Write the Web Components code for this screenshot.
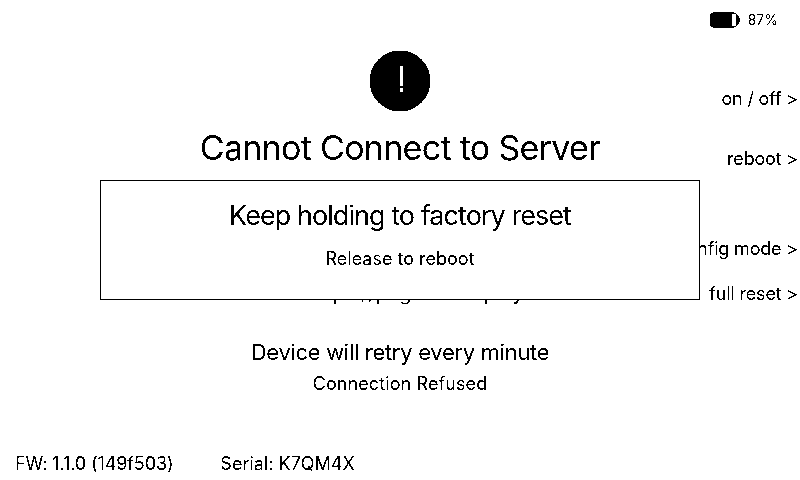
<!DOCTYPE html>
<html>
<head>
<meta charset="utf-8">
<style>
  html, body { margin: 0; padding: 0; background: #fff; }
  body { width: 800px; height: 480px; overflow: hidden; font-family: Inter, "Liberation Sans", sans-serif; color: #000; }
</style>
</head>
<body>
<device-screen>
  <status-battery slot="status" level="87%"></status-battery>
  <button-hint slot="hints" style="top:88px">on / off &gt;</button-hint>
  <button-hint slot="hints" style="top:148px">reboot &gt;</button-hint>
  <button-hint slot="hints" style="top:238px">config mode &gt;</button-hint>
  <button-hint slot="hints" style="top:283px">full reset &gt;</button-hint>
  <error-panel>
    <span slot="title">Cannot Connect to Server</span>
    <span slot="body">Check your network settings, then visit<br>Read https://page-to-deploy.io</span>
    <span slot="retry">Device will retry every minute</span>
    <span slot="reason">Connection Refused</span>
  </error-panel>
  <device-footer slot="footer" fw="FW: 1.1.0 (149f503)" serial="Serial: K7QM4X"></device-footer>
  <reset-dialog slot="overlay">
    <span slot="title">Keep holding to factory reset</span>
    <span>Release to reboot</span>
  </reset-dialog>
</device-screen>

<svg width="0" height="0" style="position:absolute">
  <filter id="mono" color-interpolation-filters="sRGB" x="0" y="0" width="100%" height="100%">
    <feComponentTransfer>
      <feFuncR type="discrete" tableValues="0 1"/>
      <feFuncG type="discrete" tableValues="0 1"/>
      <feFuncB type="discrete" tableValues="0 1"/>
    </feComponentTransfer>
  </filter>
</svg>

<script>
class DeviceScreen extends HTMLElement {
  connectedCallback() {
    this.attachShadow({ mode: 'open' });
    this.shadowRoot.innerHTML = `
      <style>
        :host { display: block; position: relative; width: 800px; height: 480px; background: #fff; filter: url(#mono); }
        .status { display: flex; justify-content: flex-end; height: 38px; }
        .footer { position: absolute; left: 0; right: 0; bottom: 0; }
      </style>
      <div class="status"><slot name="status"></slot></div>
      <slot></slot>
      <slot name="hints"></slot>
      <div class="footer"><slot name="footer"></slot></div>
      <slot name="overlay"></slot>
    `;
  }
}

class StatusBattery extends HTMLElement {
  connectedCallback() {
    this.attachShadow({ mode: 'open' });
    this.shadowRoot.innerHTML = `
      <style>
        :host { display: flex; align-items: center; gap: 8px; padding: 11px 22px 0 0; height: 17px; font-size: 14px; }
        svg { display: block; }
      </style>
      <svg width="30" height="16" viewBox="0 0 30 16">
        <rect x="0" y="0.5" width="27" height="15" rx="3" fill="#000"/>
        <rect x="22" y="2" width="4" height="12" fill="#fff"/>
        <path d="M27 3c1.8 .8 2.8 2.6 2.8 5s-1 4.200-2.800 5z" fill="#000"/>
      </svg>
      <span>${this.getAttribute('level')}</span>
    `;
  }
}

class ButtonHint extends HTMLElement {
  connectedCallback() {
    this.attachShadow({ mode: 'open' });
    this.shadowRoot.innerHTML = `
      <style>
        :host { display: block; position: absolute; right: 2px; font-size: 18px; line-height: 22px; letter-spacing: -0.19px; white-space: nowrap; }
      </style>
      <slot></slot>
    `;
  }
}

class ErrorPanel extends HTMLElement {
  connectedCallback() {
    this.attachShadow({ mode: 'open' });
    this.shadowRoot.innerHTML = `
      <style>
        :host { display: flex; flex-direction: column; align-items: center; padding-top: 12px; text-align: center; }
        .icon { width: 62px; height: 62px; display: block; }
        .title { font-size: 34px; line-height: 44px; letter-spacing: -0.7px; margin-top: 14px; }
        .body { font-size: 20px; line-height: 30px; margin-top: 78px; }
        .retry { font-size: 22px; line-height: 28px; letter-spacing: -0.3px; margin-top: 30px; }
        .reason { font-size: 18px; line-height: 24px; letter-spacing: 0.1px; margin-top: 6px; }
      </style>
      <svg class="icon" viewBox="0 0 62 62">
        <circle cx="31" cy="31" r="30.5" fill="#000"/>
        <rect x="31" y="16" width="3" height="20" fill="#fff"/>
        <circle cx="32.500" cy="40" r="2" fill="#fff"/>
      </svg>
      <div class="title"><slot name="title"></slot></div>
      <div class="body"><slot name="body"></slot></div>
      <div class="retry"><slot name="retry"></slot></div>
      <div class="reason"><slot name="reason"></slot></div>
    `;
  }
}

class DeviceFooter extends HTMLElement {
  connectedCallback() {
    this.attachShadow({ mode: 'open' });
    this.shadowRoot.innerHTML = `
      <style>
        :host { display: flex; gap: 47px; padding: 0 0 4px 15px; font-size: 18px; line-height: 24px; letter-spacing: -0.11px; }
        .serial { letter-spacing: 0; }
      </style>
      <span>${this.getAttribute('fw')}</span>
      <span class="serial">${this.getAttribute('serial')}</span>
    `;
  }
}

class ResetDialog extends HTMLElement {
  connectedCallback() {
    this.attachShadow({ mode: 'open' });
    this.shadowRoot.innerHTML = `
      <style>
        :host { display: flex; flex-direction: column; align-items: center; box-sizing: border-box; position: absolute; left: 100px; top: 180px; width: 600px; height: 120px; background: #fff; border: 1px solid #000; padding-top: 17px; }
        .title { font-size: 27px; line-height: 36px; letter-spacing: -0.95px; }
        .sub { font-size: 18px; line-height: 24px; margin-top: 13px; }
      </style>
      <div class="title"><slot name="title"></slot></div>
      <div class="sub"><slot></slot></div>
    `;
  }
}

customElements.define('device-screen', DeviceScreen);
customElements.define('status-battery', StatusBattery);
customElements.define('button-hint', ButtonHint);
customElements.define('error-panel', ErrorPanel);
customElements.define('device-footer', DeviceFooter);
customElements.define('reset-dialog', ResetDialog);
</script>
</body>
</html>
